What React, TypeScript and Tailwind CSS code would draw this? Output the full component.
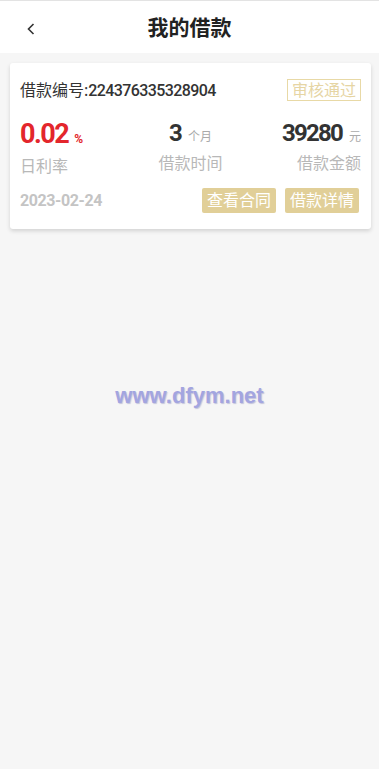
import React from "react";

export default function App() {
  const cjk = { fontFamily: '"Noto Sans", "Noto Sans CJK SC", sans-serif' };
  const num = { fontFamily: 'Roboto, "Noto Sans CJK SC", sans-serif' };
  return (
    <div className="min-h-[769px] w-[379px] bg-[#f6f6f6] flex flex-col" style={cjk}>
      <div className="h-px bg-[#e3e3e3]" />
      <div className="h-[52px] bg-white flex items-center relative">
        <svg className="absolute left-[26px] top-[21px]" width="10" height="14" viewBox="0 0 10 14">
          <path d="M7.5 2 L2.5 7 L7.5 12" fill="none" stroke="#333" strokeWidth="1.6" />
        </svg>
        <div className="w-full text-center text-[21px] font-bold text-[#222] leading-none">我的借款</div>
      </div>
      <div className="ml-[10px] mr-[8px] mt-[10px] bg-white rounded-[3px] shadow-[0_2px_4px_rgba(0,0,0,0.15)] px-[10px] pt-[16px] pb-[16px]">
        <div className="flex items-center justify-between h-[22px]">
          <div className="text-[16px] text-[#333] leading-none">
            借款编号:<span style={num} className="font-medium tracking-[-0.6px]">224376335328904</span>
          </div>
          <div className="border border-[#e8d9a6] text-[#e6d5a4] text-[16px] leading-[20px] px-[4px]">审核通过</div>
        </div>
        <div className="grid grid-cols-3 mt-[20px]">
          <div className="flex flex-col items-start">
            <div className="flex items-baseline" style={num}>
              <span className="text-[27px] font-bold text-[#e3262c] leading-none tracking-[-1.5px]">0.02</span>
              <span className="text-[12px] font-bold text-[#e3262c] ml-[6px] leading-none">%</span>
            </div>
            <div className="text-[16px] text-[#b8b8b8] mt-[10px] leading-none">日利率</div>
          </div>
          <div className="flex flex-col items-center">
            <div className="flex items-baseline" style={num}>
              <span className="text-[24px] font-bold text-[#333] leading-none">3</span>
              <span className="text-[12px] text-[#aaa] ml-[5px] leading-none" style={cjk}>个月</span>
            </div>
            <div className="text-[16px] text-[#b8b8b8] mt-[10px] leading-none">借款时间</div>
          </div>
          <div className="flex flex-col items-end">
            <div className="flex items-baseline" style={num}>
              <span className="text-[24px] font-bold text-[#333] leading-none tracking-[-1.8px]">39280</span>
              <span className="text-[12px] text-[#aaa] ml-[7px] leading-none" style={cjk}>元</span>
            </div>
            <div className="text-[16px] text-[#b8b8b8] mt-[10px] leading-none">借款金额</div>
          </div>
        </div>
        <div className="flex items-center justify-between mt-[14px]">
          <div className="text-[16px] font-bold text-[#c4c4c4] tracking-[-0.4px]" style={num}>2023-02-24</div>
          <div className="flex gap-[9px]">
            <div className="bg-[#e1cf98] text-white text-[16px] leading-[25px] px-[5px] rounded-[2px]">查看合同</div>
            <div className="bg-[#e1cf98] text-white text-[16px] leading-[25px] px-[5px] rounded-[2px] mr-[2px]">借款详情</div>
          </div>
        </div>
      </div>
      <div className="mt-[156px] text-center text-[22px] leading-none font-bold text-[#a3a5e0] [text-shadow:1px_1px_1px_rgba(80,80,160,0.3)]" style={{ fontFamily: '"Liberation Sans", Arial, sans-serif' }}>
        www.dfym.net
      </div>
    </div>
  );
}
